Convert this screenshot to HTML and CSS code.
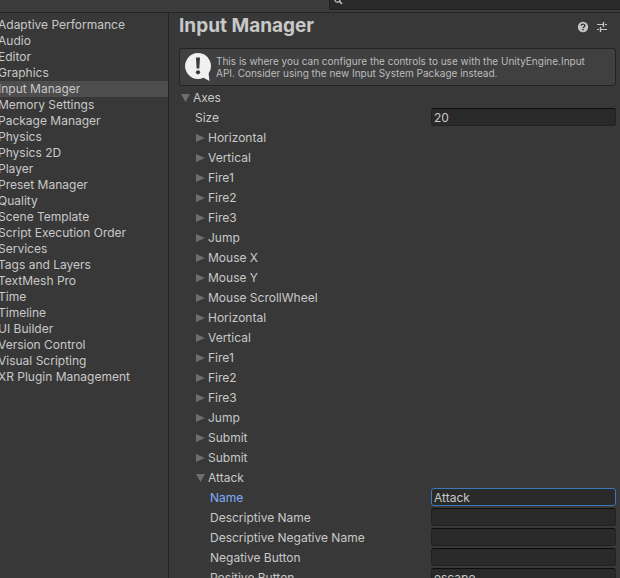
FILE: index.html
```html
<!DOCTYPE html>
<html lang="en">
<head>
  <meta charset="UTF-8">
  <meta name="viewport" content="width=device-width, initial-scale=1.0">
  <title>Project Settings</title>
  <link rel="stylesheet" href="styles.css">
</head>
<body>
  <header class="toolbar">
    <div class="search">
      <svg class="search-icon" viewBox="0 0 12 12" aria-hidden="true">
        <circle cx="4.5" cy="4.5" r="2.6" fill="none" stroke="#c4c4c4" stroke-width="1.2"/>
        <path d="M6.3 6.3L9 9" stroke="#c4c4c4" stroke-width="1.6"/>
      </svg>
      <input type="text" class="search-input" aria-label="Search settings">
    </div>
  </header>

  <div class="window">
    <nav class="sidebar">
      <a href="#">Adaptive Performance</a>
      <a href="#">Audio</a>
      <a href="#">Editor</a>
      <a href="#">Graphics</a>
      <a href="#" class="selected">Input Manager</a>
      <a href="#">Memory Settings</a>
      <a href="#">Package Manager</a>
      <a href="#">Physics</a>
      <a href="#">Physics 2D</a>
      <a href="#">Player</a>
      <a href="#">Preset Manager</a>
      <a href="#">Quality</a>
      <a href="#">Scene Template</a>
      <a href="#">Script Execution Order</a>
      <a href="#">Services</a>
      <a href="#">Tags and Layers</a>
      <a href="#">TextMesh Pro</a>
      <a href="#">Time</a>
      <a href="#">Timeline</a>
      <a href="#">UI Builder</a>
      <a href="#">Version Control</a>
      <a href="#">Visual Scripting</a>
      <a href="#">XR Plugin Management</a>
    </nav>

    <main class="content">
      <div class="heading">
        <h1>Input Manager</h1>
        <button type="button" class="icon-btn" aria-label="Help">
          <svg viewBox="0 0 12 12">
            <circle cx="6" cy="6" r="5.2" fill="#c4c4c4"/>
            <path d="M4.2 4.8C4.2 2.6 7.8 2.6 7.8 4.7C7.8 6 6 6 6 7.3" fill="none" stroke="#383838" stroke-width="1.4"/>
            <rect x="5.3" y="8" width="1.4" height="1.4" fill="#383838"/>
          </svg>
        </button>
        <button type="button" class="icon-btn" aria-label="Presets">
          <svg viewBox="0 0 12 12">
            <path d="M1 3.5H7.5M9 3.5H11M1 8.5H3M4.5 8.5H11" stroke="#c4c4c4" stroke-width="1.2"/>
            <path d="M7.5 1V6M4.5 6V11" stroke="#c4c4c4" stroke-width="1.4"/>
          </svg>
        </button>
      </div>

      <div class="help-box">
        <svg class="help-icon" viewBox="0 0 28 30" aria-hidden="true">
          <path d="M14 1A13 13 0 1 0 19.5 25.8L25.5 29L24.6 21.4A13 13 0 0 0 14 1Z" fill="#f0f0f0"/>
          <path d="M12 5.5H16L15.3 16.5H12.7Z" fill="#383838"/>
          <circle cx="14" cy="20.3" r="2.1" fill="#383838"/>
        </svg>
        <p>This is where you can configure the controls to use with the UnityEngine.Input API. Consider using the new Input System Package instead.</p>
      </div>

      <button type="button" class="foldout open" aria-expanded="true">Axes</button>
      <div class="axes">
        <div class="field">
          <label for="size">Size</label>
          <input type="text" id="size" value="20">
        </div>
        <button type="button" class="foldout" aria-expanded="false">Horizontal</button>
        <button type="button" class="foldout" aria-expanded="false">Vertical</button>
        <button type="button" class="foldout" aria-expanded="false">Fire1</button>
        <button type="button" class="foldout" aria-expanded="false">Fire2</button>
        <button type="button" class="foldout" aria-expanded="false">Fire3</button>
        <button type="button" class="foldout" aria-expanded="false">Jump</button>
        <button type="button" class="foldout" aria-expanded="false">Mouse X</button>
        <button type="button" class="foldout" aria-expanded="false">Mouse Y</button>
        <button type="button" class="foldout" aria-expanded="false">Mouse ScrollWheel</button>
        <button type="button" class="foldout" aria-expanded="false">Horizontal</button>
        <button type="button" class="foldout" aria-expanded="false">Vertical</button>
        <button type="button" class="foldout" aria-expanded="false">Fire1</button>
        <button type="button" class="foldout" aria-expanded="false">Fire2</button>
        <button type="button" class="foldout" aria-expanded="false">Fire3</button>
        <button type="button" class="foldout" aria-expanded="false">Jump</button>
        <button type="button" class="foldout" aria-expanded="false">Submit</button>
        <button type="button" class="foldout" aria-expanded="false">Submit</button>
        <button type="button" class="foldout open" aria-expanded="true">Attack</button>
        <div class="axis">
          <div class="field active">
            <label for="name">Name</label>
            <input type="text" id="name" value="Attack">
          </div>
          <div class="field">
            <label for="descriptive-name">Descriptive Name</label>
            <input type="text" id="descriptive-name">
          </div>
          <div class="field">
            <label for="descriptive-negative-name">Descriptive Negative Name</label>
            <input type="text" id="descriptive-negative-name">
          </div>
          <div class="field">
            <label for="negative-button">Negative Button</label>
            <input type="text" id="negative-button">
          </div>
          <div class="field">
            <label for="positive-button">Positive Button</label>
            <input type="text" id="positive-button" value="escape">
          </div>
        </div>
      </div>
    </main>
  </div>
</body>
</html>
```
FILE: styles.css
```css
* {
  box-sizing: border-box;
}
body {
  display: flex;
  flex-direction: column;
  height: 100vh;
  margin: 0;
  overflow: hidden;
  background-color: #383838;
  color: #c8c8c8;
  font-family: Inter, sans-serif;
  font-size: 12px;
  line-height: 16px;
}
input, button {
  font: inherit;
  color: inherit;
}
.toolbar {
  display: flex;
  flex-shrink: 0;
  align-items: flex-end;
  justify-content: flex-end;
  height: 13px;
  padding-bottom: 2px;
  overflow: hidden;
  background-color: #3c3c3c;
  border-bottom: 1px solid #232323;
}
.search {
  display: flex;
  align-items: center;
  width: 47%;
  height: 18px;
  padding-left: 3px;
  background-color: #2a2a2a;
  border: 1px solid #212121;
  border-right: none;
  border-radius: 3px 0 0 3px;
}
.search-icon {
  width: 12px;
  height: 12px;
}
.search-input {
  flex: 1;
  min-width: 0;
  padding: 0;
  border: none;
  outline: none;
  background: none;
}
.window {
  display: flex;
  flex: 1;
  min-height: 0;
}
.sidebar {
  flex: 0 0 169px;
  padding-top: 4px;
  border-right: 1px solid #232323;
  overflow: hidden;
}
.sidebar a {
  display: block;
  margin-left: -2px;
  color: inherit;
  text-decoration: none;
  white-space: nowrap;
}
.sidebar .selected {
  background-color: #4d4d4d;
}
.content {
  flex: 1;
  min-width: 0;
  padding: 0 4px 0 10px;
  overflow: hidden;
}
.heading {
  display: flex;
  align-items: center;
  gap: 7px;
  height: 35px;
  padding: 0 8px 8px 0;
}
h1 {
  flex: 1;
  margin: 0;
  padding-bottom: 2px;
  font-size: 19px;
  line-height: 24px;
}
.icon-btn {
  width: 12px;
  height: 12px;
  padding: 0;
  border: none;
  background: none;
}
.icon-btn svg {
  display: block;
}
.help-box {
  display: flex;
  align-items: center;
  gap: 4px;
  height: 38px;
  padding: 0 16px 0 4px;
  background-color: #404040;
  border: 1px solid #232323;
  border-radius: 3px;
}
.help-box p {
  margin: 0;
  font-size: 10px;
  line-height: 12px;
  color: #bdbdbd;
}
.help-icon {
  flex-shrink: 0;
  width: 28px;
  height: 30px;
}
.foldout {
  display: flex;
  align-items: center;
  gap: 3px;
  width: 100%;
  height: 20px;
  padding: 0 0 0 2px;
  border: none;
  background: none;
  text-align: left;
}
.foldout::before {
  content: "";
  width: 9px;
  height: 8px;
  background-color: #6e6e6e;
  clip-path: polygon(0 0, 100% 50%, 0 100%);
}
.foldout.open::before {
  clip-path: polygon(0 0, 100% 0, 50% 100%);
}
.help-box + .foldout {
  margin-top: 2px;
}
.axes {
  padding-left: 15px;
}
.axis {
  padding-left: 15px;
}
.field {
  display: flex;
  justify-content: space-between;
  height: 20px;
  padding-left: 1px;
}
.field label {
  line-height: 20px;
}
.field input {
  width: 185px;
  height: 18px;
  padding: 0 2px;
  background-color: #2a2a2a;
  border: 1px solid #212121;
  border-top-color: #0d0d0d;
  border-radius: 3px;
  outline: none;
}
.field.active label {
  color: #7baefa;
}
.field.active input {
  border-color: #3a79bb;
}
```
